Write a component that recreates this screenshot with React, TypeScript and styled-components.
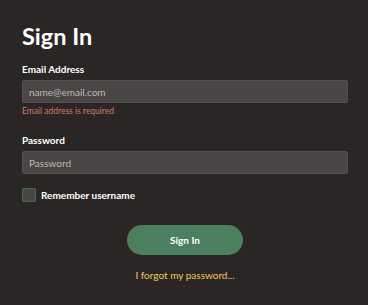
import React from 'react';
import styled, { createGlobalStyle } from 'styled-components';

const GlobalStyle = createGlobalStyle`
  html, body {
    margin: 0;
    padding: 0;
    background: #2a2625;
  }
  body {
    font-family: Lato, 'Liberation Sans', sans-serif;
    color: #ffffff;
  }
`;

const Page = styled.main`
  width: 368px;
  height: 305px;
  box-sizing: border-box;
  padding: 22px 20px 0 22px;
  display: flex;
  flex-direction: column;
`;

const Title = styled.h1`
  margin: 0;
  font-size: 23.5px;
  line-height: 28px;
  font-weight: 700;
  color: #ffffff;
`;

const Form = styled.form`
  display: flex;
  flex-direction: column;
  margin-top: 12px;
`;

const Field = styled.div<{ $gap?: number }>`
  display: flex;
  flex-direction: column;
  margin-bottom: ${(p) => p.$gap ?? 0}px;
`;

const Label = styled.label`
  font-size: 10px;
  line-height: 14px;
  font-weight: 700;
  color: #ffffff;
  margin-bottom: 4px;
`;

const Input = styled.input`
  box-sizing: border-box;
  width: 326px;
  height: 23px;
  margin: 0;
  padding: 0 6px;
  background: #4a4645;
  border: 1px solid #555150;
  border-radius: 2px;
  color: #ffffff;
  font-family: Lato, 'Liberation Sans', sans-serif;
  font-size: 10px;
  outline: none;

  &::placeholder {
    color: #bdb8b6;
  }
`;

const ErrorText = styled.div`
  font-size: 8.5px;
  line-height: 12px;
  margin-top: 2px;
  color: #d47a66;
`;

const CheckRow = styled.label`
  display: flex;
  align-items: center;
  gap: 5px;
  font-size: 10px;
  line-height: 14px;
  font-weight: 700;
  color: #ffffff;
`;

const Box = styled.span`
  box-sizing: border-box;
  width: 14px;
  height: 14px;
  background: #4a4645;
  border: 1px solid #3f6b51;
  border-radius: 1px;
`;

const Actions = styled.div`
  display: flex;
  flex-direction: column;
  align-items: center;
  margin-top: 23px;
`;

const Button = styled.button`
  width: 116px;
  height: 30px;
  border: none;
  border-radius: 15px;
  background: #4b7f5d;
  color: #ffffff;
  font-family: Lato, 'Liberation Sans', sans-serif;
  font-size: 10px;
  font-weight: 700;
  cursor: pointer;
`;

const Forgot = styled.a`
  margin-top: 13px;
  font-size: 10px;
  line-height: 14px;
  color: #f0c866;
  text-decoration: none;
`;

export default function App() {
  return (
    <>
      <GlobalStyle />
      <Page>
        <Title>Sign In</Title>
        <Form onSubmit={(e) => e.preventDefault()}>
          <Field $gap={16}>
            <Label>Email Address</Label>
            <Input placeholder={'name@email.com'} />
            <ErrorText>Email address is required</ErrorText>
          </Field>
          <Field $gap={14}>
            <Label>Password</Label>
            <Input type={'password'} placeholder={'Password'} />
          </Field>
          <CheckRow>
            <Box />
            Remember username
          </CheckRow>
          <Actions>
            <Button type={'submit'}>Sign In</Button>
            <Forgot href={'#'}>I forgot my password...</Forgot>
          </Actions>
        </Form>
      </Page>
    </>
  );
}
